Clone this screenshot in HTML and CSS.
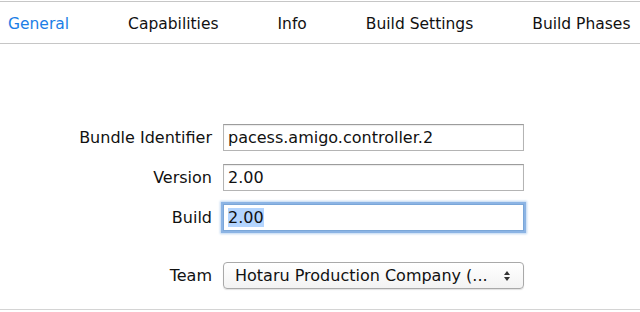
FILE: index.html
```html
<!DOCTYPE html>
<html lang="en">
<head>
    <meta charset="UTF-8">
    <title>General</title>
    <link rel="stylesheet" href="styles.css">
</head>
<body>
    <div class="tabs">
        <span class="tab active">General</span>
        <span class="tab">Capabilities</span>
        <span class="tab">Info</span>
        <span class="tab">Build Settings</span>
        <span class="tab">Build Phases</span>
    </div>

    <div class="identity">
        <div class="row">
            <label>Bundle Identifier</label>
            <div class="field">pacess.amigo.controller.2</div>
        </div>
        <div class="row">
            <label>Version</label>
            <div class="field">2.00</div>
        </div>
        <div class="row">
            <label>Build</label>
            <div class="field focused"><span class="selected">2.00</span></div>
        </div>
        <div class="row team">
            <label>Team</label>
            <div class="popup">
                <span>Hotaru Production Company (...</span>
                <svg width="8" height="12" viewBox="0 0 8 12">
                    <path d="M4 1 L7 5 L1 5 Z" fill="#333"/>
                    <path d="M4 11 L7 7 L1 7 Z" fill="#333"/>
                </svg>
            </div>
        </div>
    </div>
</body>
</html>
```

FILE: styles.css
```css
body {
    margin: 0;
    font-family: "DejaVu Sans", sans-serif;
    font-size: 16px;
    color: #111;
    background-color: #FFFFFF;
    height: 312px;
    overflow: hidden;
}
.tabs {
    display: flex;
    gap: 59px;
    margin-top: 1px;
    padding-left: 8px;
    height: 41px;
    align-items: center;
    border-top: 1px solid #c6c6c6;
    border-bottom: 1px solid #c6c6c6;
    font-size: 15.5px;
}
.tab {
    color: #111;
    padding-top: 2px;
}
.tab.active {
    color: #1b7ee6;
}
.identity {
    height: 266px;
    border-bottom: 1px solid #d4d4d4;
    padding-top: 80px;
    box-sizing: border-box;
}
.row {
    display: grid;
    grid-template-columns: 212px 301px;
    column-gap: 11px;
    align-items: center;
    height: 27px;
    margin-bottom: 13px;
}
.row.team {
    margin-top: 31px;
    height: 27px;
}
label {
    text-align: right;
}
.field {
    height: 27px;
    box-sizing: border-box;
    border: 1px solid #b4b4b4;
    border-top-color: #9c9c9c;
    padding: 0 0 0 4px;
    line-height: 25px;
    box-shadow: inset 0 1px 1px rgba(0,0,0,0.08);
}
.field.focused {
    border-color: #7aa6d8;
    box-shadow: 0 0 0 2px #8cb4e4, 0 0 2px 3px rgba(90,150,220,0.4);
}
.selected {
    background-color: #b4d5fe;
}
.popup {
    height: 27px;
    box-sizing: border-box;
    border: 1px solid #a9a9a9;
    border-radius: 4px;
    background: linear-gradient(#ffffff, #f3f3f3);
    box-shadow: 0 1px 1px rgba(0,0,0,0.12);
    display: flex;
    align-items: center;
    justify-content: space-between;
    padding: 0 12px 0 11px;
}
```
